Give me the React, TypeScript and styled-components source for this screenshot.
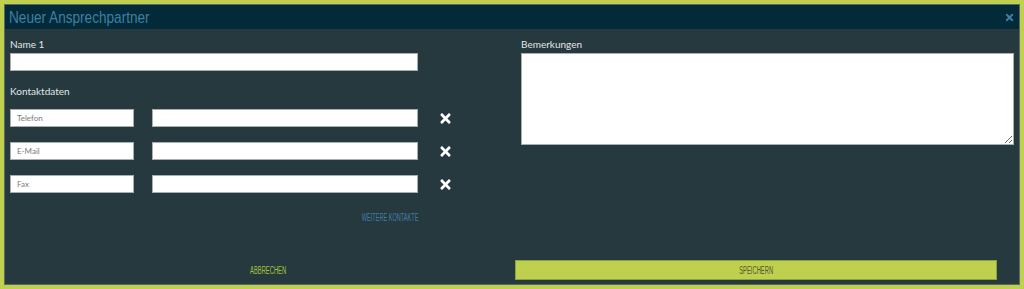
import React, { FC } from 'react';
import styled, { createGlobalStyle } from 'styled-components';
import { FaTimes } from 'react-icons/fa';

const GlobalStyle = createGlobalStyle`
  html, body {
    margin: 0;
    padding: 0;
    background: #bfcf4e;
  }
  body {
    font-family: Lato, "Open Sans", sans-serif;
  }
`;

const Frame = styled.div`
  width: 1024px;
  height: 289px;
  padding: 4px;
  box-sizing: border-box;
  background: #bfcf4e;
`;

const Dialog = styled.div`
  display: flex;
  flex-flow: nowrap column;
  width: 1016px;
  height: 281px;
  box-sizing: border-box;
  border: 1px solid #5b6a68;
  background: #25393f;
`;

// condensed look: no narrow font installed, so squeeze a regular sans
const Narrow = styled.span<{ $origin?: string; $scale?: number }>`
  display: inline-block;
  font-family: "Liberation Sans", Arial, sans-serif;
  transform: scaleX(${(p) => p.$scale ?? 0.7});
  transform-origin: ${(p) => p.$origin ?? 'center'};
  white-space: nowrap;
`;

const Header = styled.div`
  display: flex;
  align-items: center;
  justify-content: space-between;
  height: 24px;
  padding: 0 4px;
  background: #022a38;

  h1 {
    margin: 0;
    font-weight: 400;
    font-size: 17px;
    line-height: 24px;
    color: #3f80a6;
  }

  .close {
    width: 11px;
    height: 11px;
    color: #3f80a6;
    cursor: pointer;
  }
`;

const Body = styled.div`
  flex: 1;
  display: grid;
  grid-template-columns: 506px 1fr;
  column-gap: 5px;
  padding: 9px 5px 0 5px;
`;

const Column = styled.div`
  display: flex;
  flex-flow: nowrap column;
`;

const Label = styled.label<{ $spaced?: boolean }>`
  display: block;
  height: 12px;
  line-height: 12px;
  margin: ${(p) => (p.$spaced ? '14px 0 12px' : '0 0 3px')};
  font-size: 10px;
  color: #e2e6e6;
`;

const TextInput = styled.input<{ $width: number }>`
  width: ${(p) => p.$width}px;
  height: 18px;
  box-sizing: border-box;
  margin: 0;
  padding: 0 6px;
  border: 1px solid #a9aeae;
  background: #fff;
  font-family: Lato, sans-serif;
  font-size: 8px;
  color: #333;
  outline: none;

  &::placeholder {
    color: #7a7a7a;
  }
`;

const ContactList = styled.div`
  display: flex;
  flex-flow: nowrap column;
  gap: 15px;
`;

const ContactRow = styled.div`
  display: flex;
  align-items: center;
  height: 18px;

  .type {
    margin-right: 18px;
  }

  .remove {
    width: 15px;
    height: 15px;
    margin-left: 20px;
    color: #fff;
    cursor: pointer;
  }
`;

const MoreLink = styled.a`
  display: block;
  width: 408px;
  margin-top: 19px;
  text-align: right;
  font-size: 10px;
  line-height: 10px;
  color: #3f80a6;
  text-decoration: none;
  cursor: pointer;
`;

const Notes = styled.textarea`
  width: 493px;
  height: 92px;
  box-sizing: border-box;
  margin: 0;
  border: 1px solid #a9aeae;
  background: #fff;
  outline: none;
`;

const Footer = styled.div`
  display: flex;
  align-items: center;
  height: 20px;
  padding: 0 0 4px 16px;
`;

const FooterButton = styled.button<{ $primary?: boolean }>`
  width: ${(p) => (p.$primary ? '482px' : '494px')};
  height: 20px;
  box-sizing: border-box;
  padding: 0;
  border: 1px solid ${(p) => (p.$primary ? '#8aa23c' : 'transparent')};
  background: ${(p) => (p.$primary ? '#bfcf4e' : 'transparent')};
  color: ${(p) => (p.$primary ? '#4f5b31' : '#a6c23d')};
  font-size: 10px;
  text-transform: uppercase;
  cursor: pointer;
`;

const contacts = ['Telefon', 'E-Mail', 'Fax'];

const App: FC = () => (
  <>
    <GlobalStyle />
    <Frame>
      <Dialog>
        <Header>
          <h1><Narrow $origin="left" $scale={0.8}>Neuer Ansprechpartner</Narrow></h1>
          <FaTimes className="close" />
        </Header>
        <Body>
          <Column>
            <Label>Name 1</Label>
            <TextInput $width={408} />
            <Label $spaced>Kontaktdaten</Label>
            <ContactList>
              {contacts.map((c) => (
                <ContactRow key={c}>
                  <TextInput className="type" $width={124} placeholder={c} />
                  <TextInput $width={266} />
                  <FaTimes className="remove" />
                </ContactRow>
              ))}
            </ContactList>
            <MoreLink><Narrow $origin="right" $scale={0.56}>WEITERE KONTAKTE</Narrow></MoreLink>
          </Column>
          <Column>
            <Label>Bemerkungen</Label>
            <Notes />
          </Column>
        </Body>
        <Footer>
          <FooterButton><Narrow $scale={0.58}>Abbrechen</Narrow></FooterButton>
          <FooterButton $primary><Narrow $scale={0.58}>Speichern</Narrow></FooterButton>
        </Footer>
      </Dialog>
    </Frame>
  </>
);

export default App;
